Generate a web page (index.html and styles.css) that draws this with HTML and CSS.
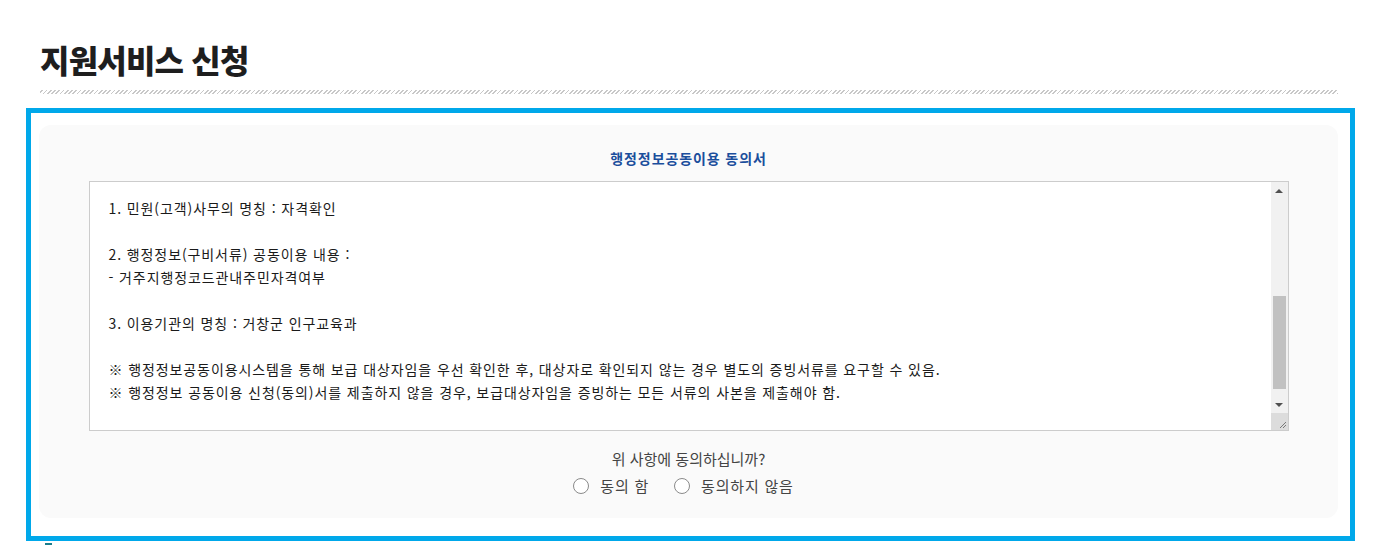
FILE: index.html
```html
<!DOCTYPE html>
<html lang="ko">
<head>
<meta charset="utf-8">
<title>지원서비스 신청</title>
<link rel="stylesheet" href="styles.css">
</head>
<body>
<div class="page">
  <div class="head">
    <h1 class="title">지원서비스 신청</h1>
    <div class="hatch"></div>
  </div>
  <div class="box">
    <div class="panel">
      <h2 class="panel-title">행정정보공동이용 동의서</h2>
      <div class="textarea">
        <div class="text">
          <p>1. 민원(고객)사무의 명칭 : 자격확인</p>
          <p class="blank">&nbsp;</p>
          <p>2. 행정정보(구비서류) 공동이용 내용 :</p>
          <p>- 거주지행정코드관내주민자격여부</p>
          <p class="blank">&nbsp;</p>
          <p>3. 이용기관의 명칭 : 거창군 인구교육과</p>
          <p class="blank">&nbsp;</p>
          <p>※ 행정정보공동이용시스템을 통해 보급 대상자임을 우선 확인한 후, 대상자로 확인되지 않는 경우 별도의 증빙서류를 요구할 수 있음.</p>
          <p>※ 행정정보 공동이용 신청(동의)서를 제출하지 않을 경우, 보급대상자임을 증빙하는 모든 서류의 사본을 제출해야 함.</p>
        </div>
        <div class="sbar">
          <div class="sbtn"><span class="tri-up"></span></div>
          <div class="track"><div class="thumb"></div></div>
          <div class="sbtn"><span class="tri-down"></span></div>
          <div class="corner">
            <svg width="17" height="17" viewBox="0 0 17 17"><path d="M15 9 L9 15 M15 12 L12 15" stroke="#7a7a7a" stroke-width="1" fill="none"/></svg>
          </div>
        </div>
      </div>
      <p class="question">위 사항에 동의하십니까?</p>
      <div class="radios">
        <label class="opt"><input type="radio" name="agree" class="radio"><span>동의 함</span></label>
        <label class="opt"><input type="radio" name="agree" class="radio"><span>동의하지 않음</span></label>
      </div>
    </div>
  </div>
  <div class="next-mark"></div>
</div>
</body>
</html>
```

FILE: styles.css
```css
* { box-sizing: border-box; }
html, body { margin: 0; padding: 0; background: #fff; }
body {
  font-family: "Noto Sans CJK KR", "Noto Sans", sans-serif;
  color: #222;
  overflow: hidden;
}
.page {
  width: 1355px;
  padding-left: 26px;
}
.head {
  padding: 0 17px 0 14px;
}
.title {
  margin: 0;
  padding-top: 36px;
  height: 90px;
  font-size: 32px;
  line-height: 46px;
  font-weight: 900;
  letter-spacing: -0.8px;
  color: #1e1e1e;
}
.hatch {
  height: 4px;
  background: repeating-linear-gradient(-45deg, #c8c8c8 0 1.3px, #fff 1.3px 3px);
}
.box {
  margin-top: 14px;
  width: 1329px;
  height: 433px;
  border: 5px solid #00a8ea;
  padding: 12px 12px 18px 8px;
}
.panel {
  height: 100%;
  background: #fafafa;
  border-radius: 12px;
  padding-top: 23px;
  display: flex;
  flex-direction: column;
  align-items: center;
}
.panel-title {
  margin: 0;
  font-size: 14px;
  line-height: 20px;
  font-weight: 700;
  letter-spacing: 0.9px;
  color: #1b4e9c;
}
.textarea {
  margin-top: 13px;
  width: 1200px;
  height: 250px;
  border: 1px solid #cccccc;
  background: #fff;
  display: flex;
}
.text {
  flex: 1;
  padding: 15px 18px 0 19px;
  font-size: 14px;
  line-height: 23px;
  letter-spacing: 0.9px;
  color: #1a1a1a;
  overflow: hidden;
}
.text p { margin: 0; white-space: nowrap; }
.sbar {
  width: 17px;
  background: #f1f1f1;
  display: flex;
  flex-direction: column;
}
.sbtn {
  height: 17px;
  display: flex;
  align-items: center;
  justify-content: center;
}
.tri-up {
  width: 0; height: 0;
  border-left: 4px solid transparent;
  border-right: 4px solid transparent;
  border-bottom: 4px solid #505050;
}
.tri-down {
  width: 0; height: 0;
  border-left: 4px solid transparent;
  border-right: 4px solid transparent;
  border-top: 4px solid #505050;
}
.track {
  flex: 1;
  padding: 97px 2px 7px 2px;
  display: flex;
}
.thumb {
  flex: 1;
  background: #c1c1c1;
}
.corner {
  height: 17px;
  background: #dcdcdc;
  display: flex;
}
.question {
  margin: 18px 0 0;
  font-size: 15px;
  line-height: 20px;
  letter-spacing: 0;
  color: #444;
}
.radios {
  margin-top: 7px;
  padding-right: 10px;
  display: flex;
  gap: 25px;
  font-size: 15px;
  line-height: 20px;
  letter-spacing: 0.8px;
  color: #444;
}
.opt {
  display: flex;
  align-items: center;
  gap: 11px;
}
.radio {
  appearance: none;
  -webkit-appearance: none;
  margin: 0;
  width: 16px;
  height: 16px;
  border: 1px solid #8a8a8a;
  border-radius: 50%;
  background: #fff;
}
.next-mark {
  margin: 2px 0 0 19px;
  width: 7px;
  height: 4px;
  background: #1c7d8c;
}
```
